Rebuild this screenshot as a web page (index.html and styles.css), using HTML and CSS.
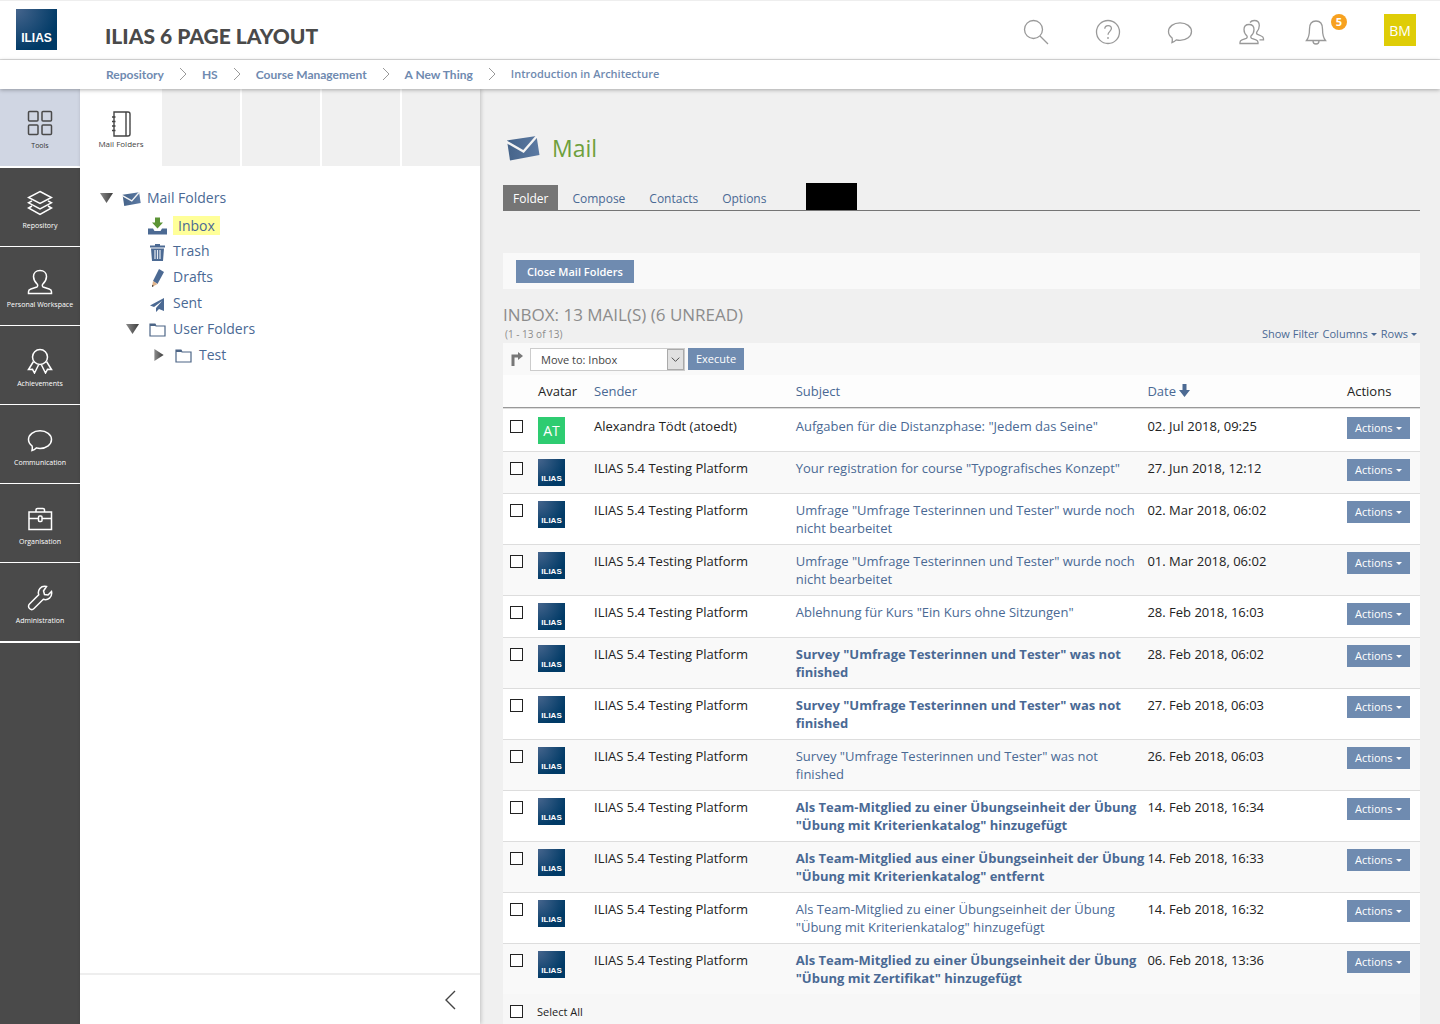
FILE: index.html
```html
<!DOCTYPE html>
<html lang="en">
<head>
    <meta charset="UTF-8">
    <meta name="viewport" content="width=device-width, initial-scale=1.0">
    <title>ILIAS 6 Page Layout</title>
    <link rel="stylesheet" href="styles.css">
</head>
<body>
    <svg class="defs" aria-hidden="true">
        <linearGradient id="blue" x1="0" y1="0" x2="1" y2="0">
            <stop offset="0" stop-color="#456389"/><stop offset="1" stop-color="#5c7aa3"/>
        </linearGradient>
        <linearGradient id="grey" x1="0" y1="0" x2="1" y2="0">
            <stop offset="0" stop-color="#8c8c8c"/><stop offset="1" stop-color="#3c3c3c"/>
        </linearGradient>
        <symbol id="mail" viewBox="0 0 34 26">
            <path d="M1 5.500 30.500 1 33.500 20 4 25.500z" fill="url(#blue)"/>
            <path d="M0 6.500 17.500 16.500 31 1" fill="none" stroke="#f4f4f4" stroke-width="2.400"/>
        </symbol>
        <symbol id="bubble" viewBox="0 0 26 26">
            <path d="M13 3.800c6.500 0 11.500 3.900 11.500 8.800s-5 8.800-11.500 8.800c-1.300 0-2.600-.2-3.700-.5-1.200 1.300-2.500 2.200-4.300 2.600.5-1.400.5-3 .1-4.500C2.800 17.300 1.500 15 1.500 12.600c0-4.900 5-8.800 11.500-8.800z"/>
        </symbol>
        <symbol id="user" viewBox="0 0 26 26">
            <path d="M10.300 15.300C8 13 6.500 10.500 6.500 7.500 6.500 4 9 1.500 13 1.500s6.500 2.500 6.500 6c0 3-1.500 5.500-3.800 7.800-.6.700-.5 2.200.4 2.700l6 2c1.500.5 2.400 1.500 2.400 2.800v1.700h-23v-1.700c0-1.300.9-2.300 2.400-2.800l6-2c.9-.5 1-2 .4-2.700z"/>
        </symbol>
        <symbol id="folder" viewBox="0 0 17 14">
            <path d="M1 13V1h5l1 2h9v10z" fill="none" stroke="#4c6586" stroke-width="1.200"/>
            <path d="M1 1h5l1 2H1z" fill="#4c6586"/>
        </symbol>
    </svg>

    <header class="topbar">
        <a class="logo" href="#">ILIAS</a>
        <h1>ILIAS 6 PAGE LAYOUT</h1>
        <div class="metabar">
            <button aria-label="Search"><svg viewBox="0 0 26 26"><circle cx="10.500" cy="10.500" r="9"/><path d="M17 17l8 8"/></svg></button>
            <button aria-label="Help"><svg viewBox="0 0 26 26"><circle cx="13" cy="13" r="11.500"/><path d="M9.800 9.800c0-2 1.400-3.200 3.300-3.200s3.300 1.200 3.300 3c0 2.700-3.400 2.900-3.400 6.200M13 18v2"/></svg></button>
            <button aria-label="Chat"><svg><use href="#bubble"/></svg></button>
            <button aria-label="Contacts"><svg viewBox="0 0 26 26"><path d="M8 17c-2-1.700-3-4-3-6.500C5 7.500 7 5.500 10 5.500s5 2 5 5c0 2.500-1 4.800-3 6.500-.5 1 0 2 .8 2.400l4.200 1.400c1.300.5 2 1.300 2 2.500v1.200H1v-1.200c0-1.200.7-2 2-2.500l4.200-1.400c.8-.4 1.300-1.400.8-2.400zM11 3.500c1-1.400 2.500-2 4.300-2 3 0 5 2 5 5 0 2.500-1 4.800-2.500 6.500-.5 1 0 2 .8 2.400l3.700 1.600c1.600.6 2.200 1.500 2.200 2.800v1h-4"/></svg></button>
            <button aria-label="Notifications, 5 new" class="bell"><svg viewBox="0 0 26 26"><path d="M3.500 21.500C5.500 19 6.500 17 6.500 10c0-5 2.500-8 6.500-8s6.500 3 6.500 8c0 7 1 9 3 11.500zM10 22c0 2 1.300 3 3 3s3-1 3-3"/></svg><span class="badge">5</span></button>
            <button class="profile">BM</button>
        </div>
    </header>
    <nav class="breadcrumbs" aria-label="Breadcrumb">
        <a href="#">Repository</a><svg viewBox="0 0 8 14"><path d="M1 1l6 6-6 6"/></svg>
        <a href="#">HS</a><svg viewBox="0 0 8 14"><path d="M1 1l6 6-6 6"/></svg>
        <a href="#">Course Management</a><svg viewBox="0 0 8 14"><path d="M1 1l6 6-6 6"/></svg>
        <a href="#">A New Thing</a><svg viewBox="0 0 8 14"><path d="M1 1l6 6-6 6"/></svg>
        <a href="#" class="current">Introduction in Architecture</a>
    </nav>

    <div class="layout">
        <nav class="mainbar" aria-label="Main">
            <button class="active"><svg viewBox="0 0 26 26"><rect x="1.500" y="1.500" width="9.500" height="9.500" rx="1"/><rect x="15" y="1.500" width="9.500" height="9.500" rx="1"/><rect x="1.500" y="15" width="9.500" height="9.500" rx="1"/><rect x="15" y="15" width="9.500" height="9.500" rx="1"/></svg>Tools</button>
            <button><svg viewBox="0 0 26 26"><path d="M13 1.500 24.500 7.500 13 13.500 1.500 7.500zM5 10.800l-3.500 2L13 19l11.500-6.200-3.500-2M5 16l-3.500 2L13 24.500 24.500 18 21 16"/></svg>Repository</button>
            <button><svg><use href="#user"/></svg>Personal Workspace</button>
            <button><svg viewBox="0 0 26 26"><circle cx="13" cy="9" r="7.500"/><path d="M6.500 13.500 1.500 21.500l4-.2 2 3.700 4-8M19.500 13.500l5 8-4-.2-2 3.700-4-8"/></svg>Achievements</button>
            <button><svg><use href="#bubble"/></svg>Communication</button>
            <button><svg viewBox="0 0 26 26"><path d="M2 6h22.500v17.500H2zM9 6V4q0-1.500 1.500-1.500h5.500q1.500 0 1.500 1.500v2M2 12.500h9.500M15 12.500h9.500"/><rect x="11.500" y="10" width="3.500" height="5.500" rx="1"/></svg>Organisation</button>
            <button><svg viewBox="0 0 26 26"><path d="M19.500 1.500c-2.500-.5-5 0-6.600 2-1.500 1.800-1.900 4-1.200 6.200L2.500 19c-1.300 1.300-1.300 3.200 0 4.500s3.200 1.300 4.500 0l9.300-9.200c2.200.7 4.500.3 6.200-1.200 2-1.700 2.500-4.200 2-6.600L21 10l-3.500-.5-1-3.500z"/></svg>Administration</button>
        </nav>

        <aside class="slate">
            <div class="slate-tabs">
                <button><svg viewBox="0 0 20 26"><path d="M3 1h14q2 0 2 2v20q0 2-2 2H3zM15 1v24M1 6h3.500M1 10.500h3.500M1 15h3.500M1 19.500h3.500"/></svg>Mail Folders</button>
                <span></span><span></span><span></span><span></span>
            </div>
            <ul class="tree">
                <li>
                    <div class="node"><svg class="toggle" viewBox="0 0 14 10"><path d="M0 0h13L6.500 10z" fill="url(#grey)"/></svg><svg class="icon"><use href="#mail"/></svg><a href="#">Mail Folders</a></div>
                    <ul>
                        <li class="node"><svg class="icon" viewBox="0 0 19 17"><path d="M0 11h5l1.500 2.500h6L14 11h5v6H0z" fill="#4c6a93"/><path d="M7 0h5v5h3l-5.500 6L4 5h3z" fill="#5c9436"/></svg><a href="#" class="selected">Inbox</a></li>
                        <li class="node"><svg class="icon" viewBox="0 0 19 18"><path d="M2 2.500h5V1h5v1.500h5v2H2zM3 5.500h13l-1 12.500H4z" fill="#4c6a93"/><path d="M7 7v9M9.500 7v9M12 7v9" stroke="#e6ebf2" stroke-width="1.200"/></svg><a href="#">Trash</a></li>
                        <li class="node"><svg class="icon" viewBox="0 0 19 18"><path d="M11 0l5 3-6.500 12L5 12z" fill="#4c6a93"/><path d="M5 12l4.500 3L4 18z" fill="#e0b48c"/><path d="M4.300 15.800L4 18l1.800-1z" fill="#333"/></svg><a href="#">Drafts</a></li>
                        <li class="node"><svg class="icon" viewBox="0 0 19 18"><path d="M16 3v13l-5-2-3 3v-4l6-7-8 6-4-1.500z" fill="#4c6a93"/></svg><a href="#">Sent</a></li>
                        <li>
                            <div class="node sub"><svg class="toggle" viewBox="0 0 14 10"><path d="M0 0h13L6.500 10z" fill="url(#grey)"/></svg><svg class="icon"><use href="#folder"/></svg><a href="#">User Folders</a></div>
                            <ul>
                                <li class="node sub"><svg class="toggle" viewBox="0 0 14 13"><path d="M2 0v13l10-6.500z" fill="url(#grey)"/></svg><svg class="icon"><use href="#folder"/></svg><a href="#">Test</a></li>
                            </ul>
                        </li>
                    </ul>
                </li>
            </ul>
            <div class="slate-foot">
                <button aria-label="Close slate"><svg viewBox="0 0 12 20"><path d="M11 1L2 10l9 9"/></svg></button>
            </div>
        </aside>

        <main>
            <div class="title">
                <svg><use href="#mail"/></svg>
                <h2>Mail</h2>
            </div>
            <nav class="tabs" aria-label="Mail">
                <a href="#" class="active">Folder</a>
                <a href="#">Compose</a>
                <a href="#">Contacts</a>
                <a href="#">Options</a>
                <span class="block"></span>
            </nav>
            <div class="toolbar"><button class="btn">Close Mail Folders</button></div>

            <h3>Inbox: 13 Mail(s) (6 unread)</h3>
            <div class="table-nav">
                <span>(1 - 13 of 13)</span>
                <a href="#">Show Filter</a>
                <a href="#" class="caret">Columns</a>
                <a href="#" class="caret">Rows</a>
            </div>
            <div class="commands">
                <svg class="arrow" viewBox="0 0 12 14"><path d="M2 14V4h6" fill="none" stroke="#777" stroke-width="3"/><path d="M7 0l5 4-5 4z" fill="#777"/></svg>
                <div class="select">
                    <select aria-label="Action">
                        <option>Move to: Inbox</option>
                        <option>Move to: Trash</option>
                        <option>Move to: Drafts</option>
                        <option>Move to: Sent</option>
                    </select>
                    <svg viewBox="0 0 16 20"><path d="M4 8l4 4 4-4"/></svg>
                </div>
                <button class="btn">Execute</button>
            </div>

            <table>
                <thead>
                    <tr>
                        <th class="col-check"></th>
                        <th class="col-avatar">Avatar</th>
                        <th class="col-sender"><a href="#">Sender</a></th>
                        <th><a href="#">Subject</a></th>
                        <th class="col-date"><a href="#">Date <svg viewBox="0 0 11 13"><path d="M3.500 0h4v6H11l-5.500 7L0 6h3.500z"/></svg></a></th>
                        <th class="col-actions">Actions</th>
                    </tr>
                </thead>
                <tbody>
                    <tr>
                        <td><input type="checkbox" aria-label="Select mail 1"></td>
                        <td><div class="avatar initials">AT</div></td>
                        <td>Alexandra Tödt (atoedt)</td>
                        <td><a href="#">Aufgaben für die Distanzphase: "Jedem das Seine"</a></td>
                        <td>02. Jul 2018, 09:25</td>
                        <td><button class="btn caret">Actions</button></td>
                    </tr>
                    <tr>
                        <td><input type="checkbox" aria-label="Select mail 2"></td>
                        <td><div class="avatar">ILIAS</div></td>
                        <td>ILIAS 5.4 Testing Platform</td>
                        <td><a href="#">Your registration for course "Typografisches Konzept"</a></td>
                        <td>27. Jun 2018, 12:12</td>
                        <td><button class="btn caret">Actions</button></td>
                    </tr>
                    <tr>
                        <td><input type="checkbox" aria-label="Select mail 3"></td>
                        <td><div class="avatar">ILIAS</div></td>
                        <td>ILIAS 5.4 Testing Platform</td>
                        <td><a href="#">Umfrage "Umfrage Testerinnen und Tester" wurde noch nicht bearbeitet</a></td>
                        <td>02. Mar 2018, 06:02</td>
                        <td><button class="btn caret">Actions</button></td>
                    </tr>
                    <tr>
                        <td><input type="checkbox" aria-label="Select mail 4"></td>
                        <td><div class="avatar">ILIAS</div></td>
                        <td>ILIAS 5.4 Testing Platform</td>
                        <td><a href="#">Umfrage "Umfrage Testerinnen und Tester" wurde noch nicht bearbeitet</a></td>
                        <td>01. Mar 2018, 06:02</td>
                        <td><button class="btn caret">Actions</button></td>
                    </tr>
                    <tr>
                        <td><input type="checkbox" aria-label="Select mail 5"></td>
                        <td><div class="avatar">ILIAS</div></td>
                        <td>ILIAS 5.4 Testing Platform</td>
                        <td><a href="#">Ablehnung für Kurs "Ein Kurs ohne Sitzungen"</a></td>
                        <td>28. Feb 2018, 16:03</td>
                        <td><button class="btn caret">Actions</button></td>
                    </tr>
                    <tr class="unread">
                        <td><input type="checkbox" aria-label="Select mail 6"></td>
                        <td><div class="avatar">ILIAS</div></td>
                        <td>ILIAS 5.4 Testing Platform</td>
                        <td><a href="#">Survey "Umfrage Testerinnen und Tester" was not finished</a></td>
                        <td>28. Feb 2018, 06:02</td>
                        <td><button class="btn caret">Actions</button></td>
                    </tr>
                    <tr class="unread">
                        <td><input type="checkbox" aria-label="Select mail 7"></td>
                        <td><div class="avatar">ILIAS</div></td>
                        <td>ILIAS 5.4 Testing Platform</td>
                        <td><a href="#">Survey "Umfrage Testerinnen und Tester" was not finished</a></td>
                        <td>27. Feb 2018, 06:03</td>
                        <td><button class="btn caret">Actions</button></td>
                    </tr>
                    <tr>
                        <td><input type="checkbox" aria-label="Select mail 8"></td>
                        <td><div class="avatar">ILIAS</div></td>
                        <td>ILIAS 5.4 Testing Platform</td>
                        <td><a href="#">Survey "Umfrage Testerinnen und Tester" was not finished</a></td>
                        <td>26. Feb 2018, 06:03</td>
                        <td><button class="btn caret">Actions</button></td>
                    </tr>
                    <tr class="unread">
                        <td><input type="checkbox" aria-label="Select mail 9"></td>
                        <td><div class="avatar">ILIAS</div></td>
                        <td>ILIAS 5.4 Testing Platform</td>
                        <td><a href="#">Als Team-Mitglied zu einer Übungseinheit der Übung "Übung mit Kriterienkatalog" hinzugefügt</a></td>
                        <td>14. Feb 2018, 16:34</td>
                        <td><button class="btn caret">Actions</button></td>
                    </tr>
                    <tr class="unread">
                        <td><input type="checkbox" aria-label="Select mail 10"></td>
                        <td><div class="avatar">ILIAS</div></td>
                        <td>ILIAS 5.4 Testing Platform</td>
                        <td><a href="#">Als Team-Mitglied aus einer Übungseinheit der Übung "Übung mit Kriterienkatalog" entfernt</a></td>
                        <td>14. Feb 2018, 16:33</td>
                        <td><button class="btn caret">Actions</button></td>
                    </tr>
                    <tr>
                        <td><input type="checkbox" aria-label="Select mail 11"></td>
                        <td><div class="avatar">ILIAS</div></td>
                        <td>ILIAS 5.4 Testing Platform</td>
                        <td><a href="#">Als Team-Mitglied zu einer Übungseinheit der Übung "Übung mit Kriterienkatalog" hinzugefügt</a></td>
                        <td>14. Feb 2018, 16:32</td>
                        <td><button class="btn caret">Actions</button></td>
                    </tr>
                    <tr class="unread">
                        <td><input type="checkbox" aria-label="Select mail 12"></td>
                        <td><div class="avatar">ILIAS</div></td>
                        <td>ILIAS 5.4 Testing Platform</td>
                        <td><a href="#">Als Team-Mitglied zu einer Übungseinheit der Übung "Übung mit Zertifikat" hinzugefügt</a></td>
                        <td>06. Feb 2018, 13:36</td>
                        <td><button class="btn caret">Actions</button></td>
                    </tr>
                </tbody>
            </table>
            <div class="select-all">
                <input type="checkbox" id="all">
                <label for="all">Select All</label>
            </div>
        </main>
    </div>
</body>
</html>
```
FILE: styles.css
```css
* { box-sizing: border-box; margin: 0; padding: 0; }
body { font-family: "Open Sans", sans-serif; font-size: 13px; line-height: 18px; color: #222; height: 100vh; display: flex; flex-direction: column; overflow: hidden; background: #f0f0f0; }
a { color: #4a6994; text-decoration: none; }
a:hover { text-decoration: underline; }
button { font-family: inherit; border: none; background: none; cursor: pointer; }
ul { list-style: none; }
svg { display: block; fill: none; }
.defs { position: absolute; width: 0; height: 0; }

/* header */
.topbar { flex: none; display: flex; align-items: center; height: 60px; padding: 0 24px 2px 16px; background: #fff; border-top: 1px solid #eee; border-bottom: 1px solid #ddd; }
.logo { display: flex; align-items: flex-end; justify-content: center; width: 41px; height: 41px; padding-bottom: 5px; background: radial-gradient(circle at 0 0, #46658d, #003a66 75%); color: #fff; font: bold 12px "Liberation Sans", sans-serif; }
h1 { margin-left: 48px; padding-top: 14px; font: 900 21px/24px Lato, sans-serif; color: #4a4a4a; }
.metabar { display: flex; align-items: center; margin-left: auto; gap: 46px; }
.metabar button { padding-top: 5px; }
.metabar svg { width: 26px; height: 26px; stroke: #999; stroke-width: 1.3; }
.metabar .bell { position: relative; margin-right: 9px; margin-left: -8px; }
.badge { position: absolute; top: 0; left: 28px; width: 16px; height: 16px; border-radius: 50%; background: #f7a11f; color: #fff; font-size: 11px; font-weight: 700; line-height: 16px; text-align: center; }
.metabar .profile { width: 32px; height: 32px; margin-top: 2px; padding: 0; background: #dfcd07; color: #fff; font-size: 14px; }

.breadcrumbs { flex: none; position: relative; z-index: 2; display: flex; align-items: center; gap: 15px; height: 29px; padding: 0 0 1px 106px; background: #fff; box-shadow: 0 1px 4px rgba(0, 0, 0, 0.3); }
.breadcrumbs a { color: #6f8ab0; font: bold 12px Lato, sans-serif; }
.breadcrumbs .current { padding-bottom: 2px; font: 600 11px "Open Sans", sans-serif; }
.breadcrumbs svg { width: 8px; height: 14px; stroke: #999; }

.layout { flex: 1; min-height: 0; display: grid; grid-template-columns: 80px 400px 1fr; }

/* main bar */
.mainbar { background: #4a4a4a; }
.mainbar button { display: flex; flex-direction: column; align-items: center; width: 100%; height: 79px; padding-top: 22px; border-bottom: 1px solid #fff; color: #fff; font-size: 7px; font-weight: 500; line-height: 10px; white-space: nowrap; }
.mainbar svg { width: 26px; height: 26px; margin-bottom: 5px; stroke: #fff; stroke-width: 1.5; }
.mainbar .active { padding-top: 21px; background: #d0d6e3; color: #333; border-bottom-width: 2px; }
.mainbar .active svg { stroke: #4a4a4a; }
.mainbar button:last-child { height: 80px; border-bottom-width: 2px; }

/* slate */
.slate { position: relative; z-index: 1; display: flex; flex-direction: column; background: #fff; box-shadow: 1px 0 4px rgba(0, 0, 0, 0.2); }
.slate-tabs { display: grid; grid-template-columns: repeat(5, 1fr); height: 77px; }
.slate-tabs span { background: #f0f0f0; border-left: 2px solid #fff; }
.slate-tabs button { display: flex; flex-direction: column; align-items: center; padding: 22px 0 0 2px; font-size: 8px; line-height: 12px; color: #444; }
.slate-tabs svg { width: 20px; height: 26px; margin-bottom: 1px; stroke: #444; stroke-width: 1.4; }
.tree { flex: 1; padding: 19px 20px; font-size: 14px; }
.tree ul { padding-left: 26px; }
.tree > li > ul { padding-top: 1px; }
.node { display: flex; align-items: center; height: 26px; padding-left: 22px; }
.tree > li > .node, .node.sub { padding-left: 0; }
.toggle { width: 14px; height: 12px; margin-right: 8px; }
.icon { width: 19px; height: 18px; margin: 2px 6px 0 0; }
.sub .icon { height: 14px; }
.selected { padding: 0 5px; line-height: 19px; background: #ff9; }
.slate-foot { display: flex; align-items: center; justify-content: flex-end; height: 51px; padding-right: 24px; border-top: 2px solid #eee; }
.slate-foot svg { width: 12px; height: 20px; stroke: #444; stroke-width: 1.4; }

/* content */
main { min-width: 0; padding: 41px 20px 0 23px; overflow-y: auto; scrollbar-width: none; }
.title { display: flex; align-items: center; gap: 12px; height: 36px; padding-left: 3px; }
.title svg { width: 34px; height: 26px; }
h2 { font-size: 23px; font-weight: 400; line-height: 36px; color: #6ea03c; }
.tabs { display: flex; align-items: flex-end; gap: 4px; height: 45px; border-bottom: 1px solid #757575; }
.tabs a { padding: 5px 10px 2px; font-size: 12px; }
.tabs .active { background: #757575; color: #fff; }
.block { width: 51px; height: 27px; margin-left: 26px; background: #000; }
.btn { height: 22px; padding: 0 8px; background: #6f8bb0; color: #fff; font-size: 11px; line-height: 20px; white-space: nowrap; }
.toolbar { height: 36px; margin-top: 42px; padding: 7px 13px; background: #f9f9f9; }
.toolbar .btn { height: 23px; padding: 0 11px; font-weight: 600; }
h3 { margin-top: 15px; font-size: 17px; font-weight: 400; line-height: 22px; text-transform: uppercase; color: #8c8c8c; }
.table-nav { display: flex; gap: 4px; height: 17px; padding: 0 3px 0 2px; font-size: 11px; line-height: 16px; }
.table-nav span { margin-right: auto; font-size: 10px; color: #8c8c8c; }
.caret::after { content: ""; display: inline-block; margin-left: 3px; vertical-align: 2px; border: 3px solid transparent; border-top-color: currentColor; border-bottom: 0; }
.commands { display: flex; align-items: center; height: 32px; padding-left: 8px; background: #f9f9f9; }
.arrow { width: 12px; height: 14px; margin-right: 7px; }
.select { position: relative; width: 155px; height: 23px; margin-right: 3px; }
select { appearance: none; width: 100%; height: 100%; padding-left: 10px; border: 1px solid #ccc; border-radius: 0; background: #fff; color: #444; font: 11px "Open Sans", sans-serif; }
.select svg { position: absolute; top: 1px; right: 1px; width: 17px; height: 21px; border: 1px solid #aaa; background: #e1e1e1; stroke: #444; pointer-events: none; }

table { width: 100%; table-layout: fixed; border-spacing: 0; }
th { padding: 7px; background: #fdfdfd; border-bottom: 1px solid #999; font-weight: 400; text-align: left; }
th svg { display: inline-block; width: 11px; height: 13px; fill: #4c6a93; vertical-align: -1px; }
.col-check { width: 28px; }
.col-avatar { width: 56px; }
.col-sender { width: 22%; }
.col-date { width: 21%; }
.col-actions { width: 80px; }
td { padding: 7px; background: #fff; border-bottom: 1px solid #ddd; vertical-align: top; }
tr:first-child td { padding-top: 8px; border-top: 1px solid #ddd; }
tr:nth-child(even) td { background: #f9f9f9; }
tr:last-child td { border-bottom: none; }
td:nth-child(4) { padding-right: 0; }
th:nth-child(5), td:nth-child(5) { padding-left: 0; }
td .btn { display: block; }
.unread a { font-weight: 700; }
input[type="checkbox"] { appearance: none; display: block; width: 13px; height: 13px; border: 1px solid #222; background: #fff; }
input[type="checkbox"]:checked { background: #4c6586; }
td input[type="checkbox"] { margin-top: 3px; }
.avatar { width: 27px; height: 27px; padding-top: 13px; background: radial-gradient(circle at 0 0, #46658d, #003a66 75%); color: #fff; font: bold 8px/14px "Liberation Sans", sans-serif; text-align: center; }
.initials { padding: 0; background: #2ecc71; font: 14px/27px "Open Sans", sans-serif; }
.select-all { display: flex; align-items: center; gap: 14px; height: 35px; padding-left: 7px; background: #f7f7f7; font-size: 11px; }
```
